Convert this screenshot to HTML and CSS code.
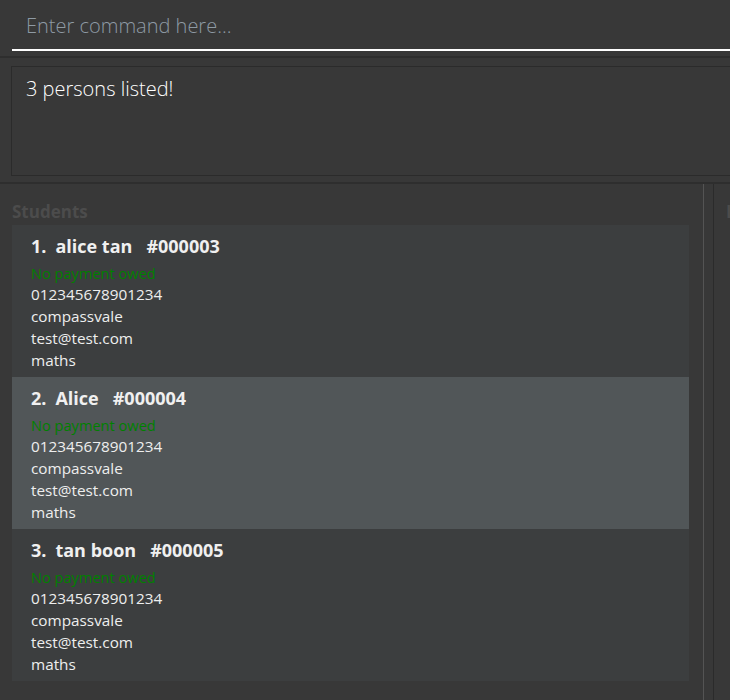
FILE: index.html
```html
<!DOCTYPE html>
<html>
<head>
<meta charset="utf-8">
<link rel="stylesheet" href="styles.css">
</head>
<body>
<div class="app">
  <div class="command-wrap">
    <div class="command-field">Enter command here...</div>
  </div>
  <div class="result-wrap">
    <div class="result-box">3 persons listed!</div>
  </div>
  <div class="main">
    <div class="left-panel">
      <div class="panel-label">Students</div>
      <div class="card">
        <div class="title"><span class="idx">1.</span><span class="name">alice tan</span><span class="sid">#000003</span></div>
        <div class="owed">No payment owed</div>
        <div class="line">012345678901234</div>
        <div class="line">compassvale</div>
        <div class="line">test@test.com</div>
        <div class="line">maths</div>
      </div>
      <div class="card card-alt">
        <div class="title"><span class="idx">2.</span><span class="name">Alice</span><span class="sid">#000004</span></div>
        <div class="owed">No payment owed</div>
        <div class="line">012345678901234</div>
        <div class="line">compassvale</div>
        <div class="line">test@test.com</div>
        <div class="line">maths</div>
      </div>
      <div class="card">
        <div class="title"><span class="idx">3.</span><span class="name">tan boon</span><span class="sid">#000005</span></div>
        <div class="owed">No payment owed</div>
        <div class="line">012345678901234</div>
        <div class="line">compassvale</div>
        <div class="line">test@test.com</div>
        <div class="line">maths</div>
      </div>
    </div>
    <div class="divider"></div>
    <div class="right-panel">
      <div class="panel-label">Lessons</div>
    </div>
  </div>
</div>
</body>
</html>
```
FILE: styles.css
```css
html, body {
  margin: 0;
  padding: 0;
  background: #383838;
  overflow: hidden;
  width: 730px;
  height: 700px;
}
.app {
  width: 1000px;
  height: 700px;
  font-family: "Open Sans", "Liberation Sans", sans-serif;
  color: #ffffff;
}
.command-wrap {
  padding: 0 0 5px 12px;
  border-bottom: 2px solid #2e2e2e;
}
.command-field {
  box-sizing: border-box;
  height: 51px;
  border-bottom: 2px solid #ffffff;
  padding: 1px 0 0 14px;
  display: flex;
  align-items: center;
  font-size: 20px;
  font-weight: 300;
  color: #8e9aa4;
}
.result-wrap {
  padding: 8px 0 6px 11px;
  border-bottom: 2px solid #2e2e2e;
}
.result-box {
  box-sizing: border-box;
  height: 110px;
  border: 1px solid #2b2b2b;
  padding: 8px 14px 0;
  font-size: 20px;
  font-weight: 300;
  line-height: 28px;
  color: #ffffff;
}
.main {
  display: flex;
  height: 516px;
}
.left-panel {
  width: 677px;
  padding: 0 14px 0 12px;
  flex: none;
}
.panel-label {
  padding-top: 18px;
  line-height: 20px;
  height: 20px;
  margin-bottom: 3px;
  font-size: 17px;
  font-weight: 700;
  color: #4c4c4c;
  white-space: nowrap;
}
.card {
  height: 152px;
  box-sizing: border-box;
  padding: 9px 0 0 19px;
  background: #3c3e3f;
  color: #eeeeee;
}
.card-alt {
  background: #515658;
}
.title {
  display: flex;
  font-size: 18px;
  font-weight: 700;
  line-height: 24px;
  height: 24px;
  color: #f0f0f0;
}
.idx {
  margin-right: 9px;
}
.name {
  margin-right: 14px;
}
.owed {
  margin-top: 5px;
  font-size: 14.6px;
  line-height: 20px;
  color: #008000;
}
.line {
  font-size: 15.3px;
  line-height: 22px;
}
.divider {
  flex: none;
  width: 9px;
  border-left: 1px solid #545454;
  border-right: 1px solid #2b2b2b;
}
.right-panel {
  flex: none;
  padding-left: 12px;
  width: 300px;
  overflow: hidden;
}
```
